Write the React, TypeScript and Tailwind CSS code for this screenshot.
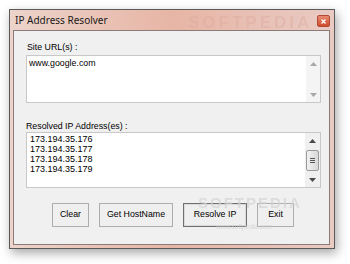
const font = { fontFamily: '"Liberation Sans", Arial, sans-serif' };

const ScrollArrow = ({ up, dim }: { up?: boolean; dim?: boolean }) => (
  <div className="flex h-[15px] items-center justify-center">
    <svg width="7" height="4" viewBox="0 0 7 4">
      <path
        d={up ? "M0 4 L3.5 0 L7 4 Z" : "M0 0 L3.5 4 L7 0 Z"}
        fill={dim ? "#a8a8a8" : "#4a4a4a"}
      />
    </svg>
  </div>
);

const Button = ({ label, w, primary }: { label: string; w: string; primary?: boolean }) => (
  <div
    className={
      "flex h-[24px] shrink-0 items-center justify-center whitespace-nowrap bg-[#efefef] text-[8.8px] text-black " +
      w +
      (primary ? " border border-[#707070] shadow-[inset_0_0_0_1px_#dadada]" : " border border-[#adadad]")
    }
  >
    {label}
  </div>
);

export default function App() {
  return (
    <div className="h-[264px] w-[350px] overflow-hidden bg-white pl-[9px] pt-[9px]" style={font}>
      <div className="relative flex h-[240px] w-[326px] flex-col border border-[#5a5a5a] bg-gradient-to-r from-[#ecd4cb] via-[#e7b5a5] to-[#e9cbc4] shadow-[2px_4px_10px_rgba(0,0,0,0.35)]">
        {/* title bar */}
        <div className="relative flex h-[20px] items-center justify-between pl-[5px] pr-[4px]">
          <span className="text-[10px] text-[#1a1a1a]" style={{ fontFamily: '"Noto Sans", "Liberation Sans", sans-serif' }}>
            IP Address Resolver
          </span>
          <span className="pointer-events-none absolute left-[178px] top-[0px] text-[17px] font-bold tracking-[3px] text-[#dca89b] opacity-40 blur-[0.6px]">
            SOFTPEDIA
          </span>
          <div className="mt-[2px] flex h-[12px] w-[13px] items-center justify-center rounded-[2px] border border-[#b04a35] bg-gradient-to-b from-[#e98a70] to-[#cf4a2c]">
            <svg width="5" height="5" viewBox="0 0 5 5">
              <path d="M0.5 0.5 L4.5 4.5 M4.5 0.5 L0.5 4.5" stroke="#fff" strokeWidth="1.3" />
            </svg>
          </div>
        </div>
        {/* client area */}
        <div className="relative ml-[3px] mr-[4px] flex flex-1 flex-col border border-[#8a7a78] bg-[#f0f0f0] pl-[12px] pr-[8px] pt-[11px] text-[8.8px] text-black">
          <div className="ml-[1px] leading-[10px]">Site URL(s) :</div>
          <div className="mt-[3px] flex h-[48px] border border-[#c8c8c8] bg-white">
            <div className="flex-1 pl-[2px] pt-[2px] leading-[10px]">www.google.com</div>
            <div className="flex w-[14px] flex-col justify-between bg-[#f4f4f4]">
              <ScrollArrow up dim />
              <ScrollArrow dim />
            </div>
          </div>
          <div className="mt-[18px] leading-[10px]">Resolved IP Address(es) :</div>
          <div className="mt-[1px] flex h-[56px] border border-[#c8c8c8] bg-white">
            <div className="flex-1 pl-[3px] pt-[1px] text-[9px] leading-[10px]">
              <div>173.194.35.176</div>
              <div>173.194.35.177</div>
              <div>173.194.35.178</div>
              <div>173.194.35.179</div>
            </div>
            <div className="flex w-[15px] flex-col bg-[#f0f0f0]">
              <ScrollArrow up />
              <div className="flex flex-1 flex-col justify-center px-[1px]">
                <div className="flex h-[21px] flex-col items-center justify-center gap-[1px] rounded-[2px] border border-[#9a9a9a] bg-gradient-to-r from-[#f2f2f2] to-[#d8d8d8]">
                  <div className="h-px w-[5px] bg-[#555]" />
                  <div className="h-px w-[5px] bg-[#555]" />
                  <div className="h-px w-[5px] bg-[#555]" />
                </div>
              </div>
              <ScrollArrow />
            </div>
          </div>
          <div className="relative mt-[15px] flex gap-[10px] pl-[26px]">
            <Button label="Clear" w="w-[37px]" />
            <Button label="Get HostName" w="w-[74px]" />
            <Button label="Resolve IP" w="w-[64px]" primary />
            <Button label="Exit" w="w-[37px]" />
            <span className="pointer-events-none absolute left-[172px] top-[-8px] text-[15px] font-bold leading-[15px] tracking-[2px] text-[#d4d4d4] opacity-70 blur-[0.4px]">
              SOFTPEDIA
            </span>
            <span className="pointer-events-none absolute left-[190px] top-[20px] text-[6.5px] leading-[7px] text-[#cfcfcf] opacity-80">
              www.softpedia.com
            </span>
          </div>
        </div>
        <div className="h-[3px]" />
      </div>
    </div>
  );
}
